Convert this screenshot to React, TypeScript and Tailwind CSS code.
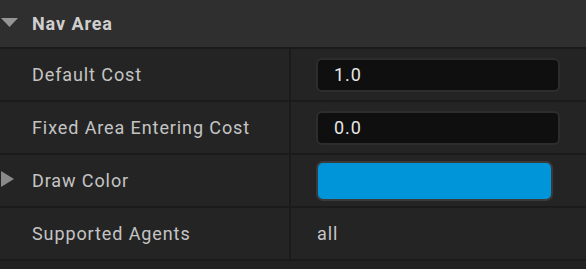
import React from 'react';

const font = { fontFamily: 'Roboto, "Liberation Sans", sans-serif' };

const Row: React.FC<{ label: string; expandable?: boolean; children: React.ReactNode }> = ({ label, expandable, children }) => (
  <div className="flex h-[53px] border-b-2 border-[#1b1b1b]">
    <div className="relative flex w-[289px] items-center pl-8 text-[18px] tracking-[0.9px] text-[#c4c4c4]">
      {expandable && (
        <svg className="absolute left-[1px] top-[16px]" width="14" height="16" viewBox="0 0 14 16">
          <polygon points="0,0 13,8 0,16" fill="#8a8a8a" />
        </svg>
      )}
      {label}
    </div>
    <div className="w-[2px] bg-[#1b1b1b]" />
    <div className="flex flex-1 items-center pl-[25px]">{children}</div>
  </div>
);

const NumberBox: React.FC<{ value: string }> = ({ value }) => (
  <div className="flex h-[34px] w-[244px] items-center rounded-[6px] border-2 border-[#2d2d2d] bg-[#0f0f0f] pl-[16px] text-[18px] tracking-[0.9px] text-[#e6e6e6]">
    {value}
  </div>
);

export default function App() {
  return (
    <div className="h-[269px] w-[586px] bg-[#222222]" style={font}>
      <div className="relative flex h-[49px] items-center border-b-2 border-[#1b1b1b] bg-[#2f2f2f] pl-8 text-[18px] font-bold tracking-[0.9px] text-[#cfcfcf]">
        <svg className="absolute left-[1px] top-[18px]" width="17" height="10" viewBox="0 0 17 10">
          <polygon points="0,0 17,0 8.5,9" fill="#959595" />
        </svg>
        Nav Area
      </div>
      <div className="bg-[#242424]">
        <Row label="Default Cost">
          <NumberBox value="1.0" />
        </Row>
        <Row label="Fixed Area Entering Cost">
          <NumberBox value="0.0" />
        </Row>
        <Row label="Draw Color" expandable>
          <div className="h-[40px] w-[237px] rounded-[7px] border-2 border-[#3a3a3a] bg-[#0095d9]" />
        </Row>
        <Row label="Supported Agents">
          <span className="pl-[1px] text-[18px] tracking-[0.9px] text-[#c4c4c4]">all</span>
        </Row>
      </div>
    </div>
  );
}
